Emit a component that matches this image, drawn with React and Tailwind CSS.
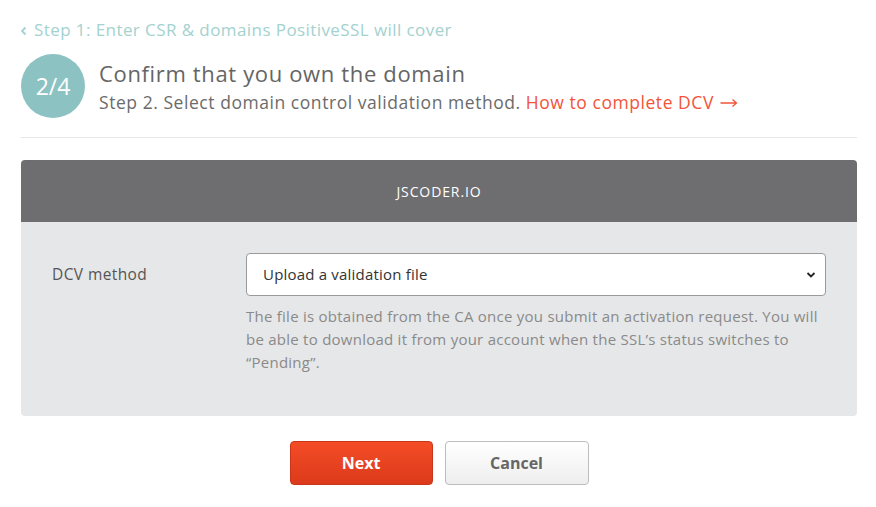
export default function App() {
  const font = { fontFamily: '"Open Sans", "Liberation Sans", sans-serif' };
  return (
    <div className="w-[876px] h-[507px] bg-white pl-[21px] pr-[19px] pt-[18px]" style={font}>
      <a className="flex items-center gap-[5px] text-[17px] tracking-[0.42px] text-[#a3d2cf] leading-[24px]">
        <svg width="10" height="12" viewBox="0 0 10 12" className="mt-[1px] -ml-[2px]">
          <path d="M6.5 2.5 L3 6 L6.5 9.5" fill="none" stroke="#a3d2cf" strokeWidth="1.8" />
        </svg>
        <span>Step 1: Enter CSR &amp; domains PositiveSSL will cover</span>
      </a>
      <div className="flex items-center gap-[14px] mt-[12px]">
        <div className="w-[64px] h-[64px] rounded-full bg-[#8cc3c2] flex items-center justify-center text-white text-[23px]">
          2/4
        </div>
        <div className="flex flex-col">
          <div className="text-[22px] tracking-[0.65px] text-[#656565] leading-[28px] mt-[1px]">Confirm that you own the domain</div>
          <div className="flex items-center text-[17.5px] tracking-[0.55px] text-[#6b6b6b] leading-[24px] mt-[3px]">
            <span>Step 2. Select domain control validation method.&nbsp;</span>
            <a className="text-[#f2543a] flex items-center">
              How to complete DCV
              <svg width="18" height="10" viewBox="0 0 18 10" className="ml-[6px] mt-[1px]">
                <path d="M0.5 5 H16.5 M12.5 1.5 L16.5 5 L12.5 8.5" fill="none" stroke="#f2543a" strokeWidth="1.3" />
              </svg>
            </a>
          </div>
        </div>
      </div>
      <div className="h-px bg-[#e6e6e6] mt-[19px]" />
      <div className="mt-[22px] rounded-[4px] overflow-hidden">
        <div className="h-[62px] bg-[#6e6e70] flex items-center justify-center text-white text-[14px] tracking-[0.9px]">
          JSCODER.IO
        </div>
        <div className="bg-[#e6e7e8] h-[194px] flex pt-[31px] pl-[31px] pr-[31px]">
          <div className="w-[194px] text-[15.5px] tracking-[0.4px] text-[#555] leading-[43px]">DCV method</div>
          <div className="flex-1 flex flex-col">
            <div className="h-[43px] bg-white border border-[#9a9a9a] rounded-[4px] flex items-center justify-between pl-[16px] pr-[9px] text-[15px] tracking-[0.2px] text-[#333]">
              <span>Upload a validation file</span>
              <svg width="10" height="8" viewBox="0 0 10 8">
                <path d="M1.5 2 L5 5.5 L8.5 2" fill="none" stroke="#222" strokeWidth="1.8" />
              </svg>
            </div>
            <p className="mt-[9px] text-[15px] tracking-[0.25px] leading-[23px] text-[#8a8a8a]">
              The file is obtained from the CA once you submit an activation request. You will be able to download it from your account when the SSL’s status switches to “Pending”.
            </p>
          </div>
        </div>
      </div>
      <div className="flex justify-center gap-[12px] mt-[25px]">
        <button className="w-[143px] h-[44px] rounded-[4px] border border-[#c9361a] bg-gradient-to-b from-[#f44c26] to-[#dc3a1b] text-white text-[16px] font-bold">
          Next
        </button>
        <button className="w-[144px] h-[44px] rounded-[4px] border border-[#bdbdbd] bg-gradient-to-b from-white to-[#eeeeee] text-[#666] text-[16px] font-bold">
          Cancel
        </button>
      </div>
    </div>
  );
}
